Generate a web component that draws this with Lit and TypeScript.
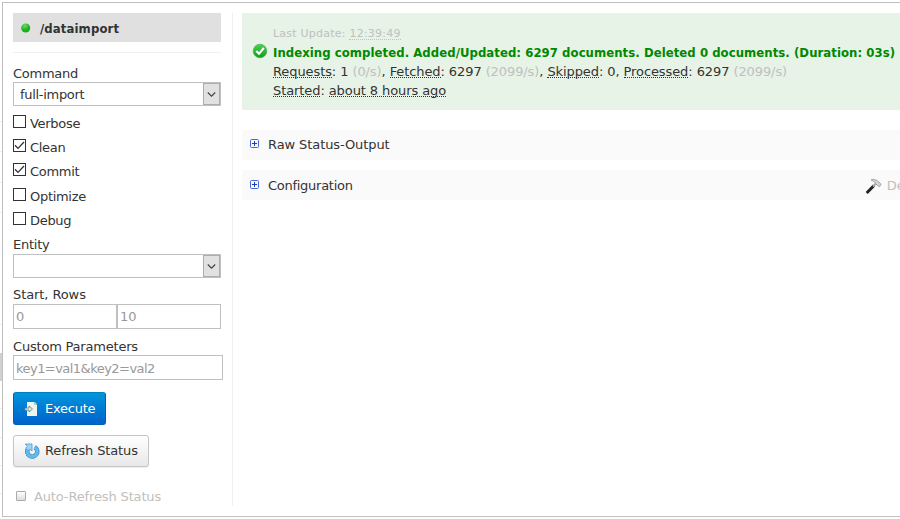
import { LitElement, html, css, svg } from "lit";
import { customElement } from "lit/decorators.js";

const chevron = svg`<path d="M0.8 1.5 L4.5 5.2 L8.2 1.5" fill="none" stroke="#444" stroke-width="1.2"/>`;

@customElement("app-root")
export class AppRoot extends LitElement {
  static styles = css`
    :host {
      display: block;
      position: relative;
      width: 900px;
      height: 519px;
      overflow: hidden;
      background: #fff;
      color: #333;
      font: 13px/20px Verdana, "DejaVu Sans", sans-serif;
      letter-spacing: -0.09px;
    }
    * { box-sizing: border-box; }
    svg { display: block; flex: none; }
    .page { display: flex; height: 519px; }
    .rail { width: 2px; height: 519px; flex: none; }
    .frame {
      flex: none; width: 910px; height: 515px; margin-top: 2px;
      border: 1px solid #c0c0c0; padding: 10px; display: flex;
    }
    .side { width: 220px; height: 493px; border-right: 1px solid #f0f0f0; flex: none; }
    .handler {
      width: 208px; height: 29px; background: #e0e0e0; display: flex; align-items: center;
      font-family: "DejaVu Sans Condensed", "DejaVu Sans", sans-serif; font-stretch: 90%;
      font-weight: bold; padding-left: 8px; gap: 9px; letter-spacing: 0.1px;
    }
    .handler span { padding-top: 2px; }
    .rule { width: 208px; height: 1px; background: #f0f0f0; margin: 10px 0 11px; }
    .label { height: 18px; line-height: 18px; white-space: nowrap; letter-spacing: -0.25px; }
    .command { line-height: 20px; }
    .start { margin-top: 8px; letter-spacing: -0.09px; }
    .cust { margin-top: 8px; line-height: 20px; letter-spacing: -0.2px; }
    .select {
      width: 208px; height: 24px; border: 1px solid #c0c0c0; display: flex;
      justify-content: space-between; line-height: 24px; padding-left: 6px; letter-spacing: -0.3px;
    }
    .arrow {
      width: 17px; height: 22px; border: 1px solid #adadad; background: #e1e1e1;
      display: flex; align-items: center; justify-content: center;
    }
    .checks { margin-top: 9px; height: 121px; }
    .check { display: flex; gap: 4px; height: 24px; }
    .check.tall { height: 25px; }
    .box { width: 13px; height: 13px; border: 1px solid #333; flex: none; }
    .check span { line-height: 18px; letter-spacing: -0.3px; }
    .field {
      height: 25px; border: 1px solid #c0c0c0; line-height: 24px; padding-left: 2px;
      color: #999; white-space: nowrap;
    }
    .pair { display: flex; width: 208px; }
    .pair .field { width: 104px; }
    .custom { width: 210px; line-height: 25px; letter-spacing: -0.54px; }
    .button {
      display: flex; align-items: center; gap: 5px; border: 1px solid #c4c4c4;
      border-radius: 3px; padding-left: 10px; white-space: nowrap; letter-spacing: -0.13px;
    }
    .execute {
      width: 93px; height: 33px; margin-top: 12px; color: #fff; letter-spacing: -0.25px;
      background: linear-gradient(#0095dc, #0062cc); border-color: #0060b5; border-top-color: #0081bd;
    }
    .refresh {
      width: 136px; height: 32px; margin-top: 10px;
      background: linear-gradient(#fff, #e8e8e8); box-shadow: 0 1px 1px #eee;
    }
    .auto { display: flex; align-items: center; height: 20px; margin: 19px 0 0 3px; gap: 8px; color: #c0c0c0; letter-spacing: -0.14px; }
    .auto span { padding-top: 1px; }
    .mini {
      width: 10px; height: 10px; border: 1px solid #aaa; border-radius: 1px;
      background: linear-gradient(#fff, #ddd);
    }
    .main { margin-left: 9px; width: 680px; flex: none; }
    .status {
      height: 97px; background: #e6f3e6; padding: 11px 0 0 31px; line-height: 19px;
      position: relative; white-space: nowrap;
    }
    .status > div { height: 19px; }
    .ok { position: absolute; left: 10px; top: 30px; }
    .update { font-size: 11px; color: #c0c0c0; letter-spacing: 0.23px; }
    .title {
      font-family: "DejaVu Sans Condensed", "DejaVu Sans", sans-serif; font-stretch: 90%;
      font-weight: bold; color: #080; letter-spacing: 0.054px;
    }
    u { text-decoration: none; border-bottom: 1px dotted currentColor; display: inline-block; height: 16px; line-height: 19px; vertical-align: top; }
    em { font-style: normal; color: #c0c0c0; }
    .panel { height: 30px; background: #fafafa; margin-top: 20px; padding-left: 7px; display: flex; align-items: center; gap: 7px; white-space: nowrap; }
    .panel + .panel { margin-top: 10px; padding-top: 2px; letter-spacing: -0.27px; }
    .debug { margin-left: 505px; display: flex; align-items: center; gap: 5px; color: #c0c0c0; letter-spacing: 0; }
  `;

  private check(name: string, on: boolean, tall = false) {
    return html`<div class="check ${tall ? "tall" : ""}">
      <div class="box">${on ? html`<svg width="11" height="11"><path d="M1 5.2 L4 8.4 L10 2" fill="none" stroke="#333" stroke-width="1.3"/></svg>` : ""}</div>
      <span>${name}</span>
    </div>`;
  }

  private select(value: string) {
    return html`<div class="select"><span>${value}</span><div class="arrow"><svg width="10" height="7">${chevron}</svg></div></div>`;
  }

  private plus() {
    return html`<svg width="12" height="12"><rect x="1.5" y=".5" width="8" height="8" rx="1" fill="#f4f7ff" stroke="#4468d8"/><path d="M3 4.5H8M5.5 2V7" stroke="#23419a"/></svg>`;
  }

  render() {
    return html`<div class="page">
      <svg class="rail" width="2" height="519">
        ${[121, 151, 182, 212, 324, 408, 437, 465, 493].map(y => svg`<rect y=${y} width="2" height="1" fill="#eee"/>`)}
        <rect y="353" width="2" height="28" fill="#d0d0d0"/>
      </svg>
      <div class="frame">
        <div class="side">
          <div class="handler">
            <svg width="10" height="12"><defs><radialGradient id="g" cx=".4" cy=".25"><stop offset="0" stop-color="#6cdc6c"/><stop offset="1" stop-color="#1cb01c"/></radialGradient></defs><circle cx="4.7" cy="6" r="4.5" fill="url(#g)"/></svg>
            <span>/dataimport</span>
          </div>
          <div class="rule"></div>
          <div class="label command">Command</div>
          ${this.select("full-import")}
          <div class="checks">
            ${this.check("Verbose", false)}${this.check("Clean", true)}${this.check("Commit", true, true)}${this.check("Optimize", false)}${this.check("Debug", false)}
          </div>
          <div class="label">Entity</div>
          ${this.select("")}
          <div class="label start">Start, Rows</div>
          <div class="pair"><div class="field">0</div><div class="field">10</div></div>
          <div class="label cust">Custom Parameters</div>
          <div class="field custom">key1=val1&amp;key2=val2</div>
          <div class="button execute">
            <svg width="16" height="16"><path d="M3 1H10.5L13 3.5V15H3Z" fill="#eef4ee"/><path d="M10.5 1V3.5H13" fill="#cde" stroke="#9bb" stroke-width=".8"/><path d="M1 7H5V5L8.5 8L5 11V9.2H1Z" fill="#dce8e4" stroke="#6b8088" stroke-width=".8"/></svg>
            <span>Execute</span>
          </div>
          <div class="button refresh">
            <svg width="16" height="16"><path d="M10.6 4.2A5 5 0 1 1 4 6" fill="none" stroke="#2f7fc0" stroke-width="4.4"/><path d="M10.6 4.2A5 5 0 1 1 4 6" fill="none" stroke="#64b8ec" stroke-width="3.4"/><path d="M1.2 1H8V8L5.9 6L4.2 7.6L1.6 5.2L3.3 3.4Z" fill="#9ad4f5" stroke="#4b9bd4" stroke-width=".8"/></svg>
            <span>Refresh Status</span>
          </div>
          <div class="auto"><div class="mini"></div><span>Auto-Refresh Status</span></div>
        </div>
        <div class="main">
          <div class="status">
            <svg class="ok" width="16" height="16"><defs><linearGradient id="o" x2="0" y2="1"><stop stop-color="#4fd04f"/><stop offset="1" stop-color="#0d9f1d"/></linearGradient></defs><circle cx="8" cy="8" r="6.8" fill="url(#o)" stroke="#3da54d" stroke-width=".6"/><path d="M4.3 8L7 10.8L11.8 5" fill="none" stroke="#fff" stroke-width="2.1"/></svg>
            <div class="update">Last Update: <u>12:39:49</u></div>
            <div class="title">Indexing completed. Added/Updated: 6297 documents. Deleted 0 documents. (Duration: 03s)</div>
            <div><u>Requests</u>: 1 <em>(0/s)</em>, <u>Fetched</u>: 6297 <em>(2099/s)</em>, <u>Skipped</u>: 0, <u>Processed</u>: 6297 <em>(2099/s)</em></div>
            <div><u>Started</u>: <u>about 8 hours ago</u></div>
          </div>
          <div class="panel">${this.plus()}<span>Raw Status-Output</span></div>
          <div class="panel">${this.plus()}<span>Configuration</span>
            <div class="debug"><svg width="17" height="17"><path d="M1.7 15L9 7.5" stroke="#222" stroke-width="3"/><path d="M8 8.5L12 4.5" stroke="#aaa" stroke-width="2"/><path d="M6 1.8Q11 0 16 6.2L14.5 8.8L12 7L10 5Q9 3 6 1.8Z" fill="#d4d4d4" stroke="#8a8a8a" stroke-width=".7"/></svg><span>De</span></div>
          </div>
        </div>
      </div>
    </div>`;
  }
}
